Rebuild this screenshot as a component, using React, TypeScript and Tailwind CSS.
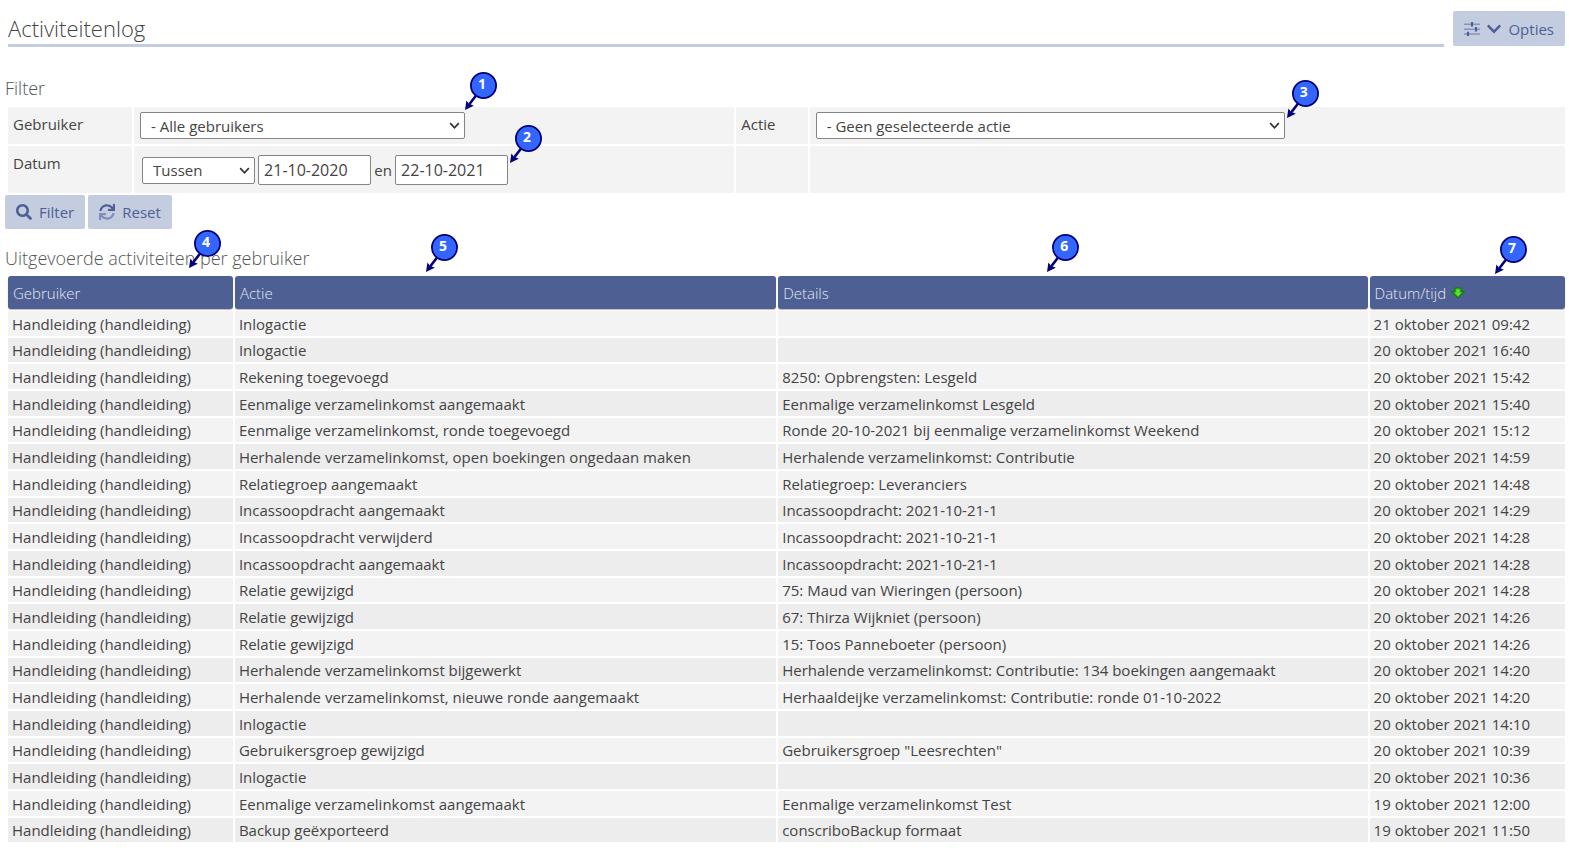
import { clsx } from 'clsx'
import { FaSearch, FaChevronDown } from 'react-icons/fa'

const ROWS = [
  ['Inlogactie', '', '21 oktober 2021 09:42'],
  ['Inlogactie', '', '20 oktober 2021 16:40'],
  ['Rekening toegevoegd', '8250: Opbrengsten: Lesgeld', '20 oktober 2021 15:42'],
  ['Eenmalige verzamelinkomst aangemaakt', 'Eenmalige verzamelinkomst Lesgeld', '20 oktober 2021 15:40'],
  ['Eenmalige verzamelinkomst, ronde toegevoegd', 'Ronde 20-10-2021 bij eenmalige verzamelinkomst Weekend', '20 oktober 2021 15:12'],
  ['Herhalende verzamelinkomst, open boekingen ongedaan maken', 'Herhalende verzamelinkomst: Contributie', '20 oktober 2021 14:59'],
  ['Relatiegroep aangemaakt', 'Relatiegroep: Leveranciers', '20 oktober 2021 14:48'],
  ['Incassoopdracht aangemaakt', 'Incassoopdracht: 2021-10-21-1', '20 oktober 2021 14:29'],
  ['Incassoopdracht verwijderd', 'Incassoopdracht: 2021-10-21-1', '20 oktober 2021 14:28'],
  ['Incassoopdracht aangemaakt', 'Incassoopdracht: 2021-10-21-1', '20 oktober 2021 14:28'],
  ['Relatie gewijzigd', '75: Maud van Wieringen (persoon)', '20 oktober 2021 14:28'],
  ['Relatie gewijzigd', '67: Thirza Wijkniet (persoon)', '20 oktober 2021 14:26'],
  ['Relatie gewijzigd', '15: Toos Panneboeter (persoon)', '20 oktober 2021 14:26'],
  ['Herhalende verzamelinkomst bijgewerkt', 'Herhalende verzamelinkomst: Contributie: 134 boekingen aangemaakt', '20 oktober 2021 14:20'],
  ['Herhalende verzamelinkomst, nieuwe ronde aangemaakt', 'Herhaaldeijke verzamelinkomst: Contributie: ronde 01-10-2022', '20 oktober 2021 14:20'],
  ['Inlogactie', '', '20 oktober 2021 14:10'],
  ['Gebruikersgroep gewijzigd', 'Gebruikersgroep "Leesrechten"', '20 oktober 2021 10:39'],
  ['Inlogactie', '', '20 oktober 2021 10:36'],
  ['Eenmalige verzamelinkomst aangemaakt', 'Eenmalige verzamelinkomst Test', '19 oktober 2021 12:00'],
  ['Backup geëxporteerd', 'conscriboBackup formaat', '19 oktober 2021 11:50'],
]

const BUTTON = 'flex items-center rounded-xs bg-[#c4cde0] text-[#4e5f94]'
const FIELD = 'block rounded-xs border border-[#858585] bg-white'
const CELL = 'rounded-xs bg-[#f3f3f3] px-[5px] align-top text-left font-normal'
const HEADING = '-ml-px text-[18px] leading-6 font-light text-[#555]'

// Numbered pin with an arrow to the lower left
function Callout({ n, className }: { n: number; className: string }) {
  return (
    <span className={clsx('pointer-events-none absolute z-10 h-10 w-[34px]', className)}>
      <svg className="absolute inset-0" width="34" height="40" viewBox="0 0 34 40">
        <path d="M13.5 23 L6.5 32" stroke="#00007c" strokeWidth="2.6" />
        <path d="M2 38 L3.4 28.6 L5.8 31.6 L10.8 33.8 Z" fill="#00007c" />
        <circle cx="20.5" cy="13.5" r="12.6" fill="#3366ff" stroke="#00007c" strokeWidth="1.8" />
      </svg>
      <span className="absolute top-1 left-[7px] w-6 text-center font-['Open_Sans',sans-serif] text-[14px] leading-4 font-bold text-white">
        {n}
      </span>
    </span>
  )
}

function Select({ id, value, className }: { id: string; value: string; className: string }) {
  return (
    <span className={clsx('relative block', className)}>
      <select id={id} className={clsx(FIELD, 'h-[27px] w-full appearance-none pl-[10px] leading-5')}>
        <option>{value}</option>
      </select>
      <svg className="pointer-events-none absolute top-[10px] right-[5px]" width="11" height="8" viewBox="0 0 11 8">
        <path d="M1.2 1.2 L5.5 5.8 L9.8 1.2" fill="none" stroke="#333" strokeWidth="1.7" />
      </svg>
    </span>
  )
}

function SlidersIcon() {
  return (
    <svg width="16" height="14" viewBox="0 0 16 14">
      <path d="M0 2.3H16M0 7.2H16M0 12H16" stroke="#8694ba" strokeWidth="1.4" />
      <path d="M8 0V4.4M12 5V9.4M4 9.8V14" stroke="#4e5f94" strokeWidth="2.2" />
    </svg>
  )
}

function RefreshIcon() {
  return (
    <svg width="16" height="16" viewBox="0 0 512 512">
      <path
        fill="#4e5f94"
        d="M440.65 12.57l4 82.77A247.16 247.16 0 0 0 255.83 8C134.73 8 33.91 94.92 12.29 209.82A12 12 0 0 0 24.09 224h49.05a12 12 0 0 0 11.67-9.26 175.91 175.91 0 0 1 317-56.94l-101.46-4.86a12 12 0 0 0-12.57 12v47.41a12 12 0 0 0 12 12H500a12 12 0 0 0 12-12V12a12 12 0 0 0-12-12h-47.37a12 12 0 0 0-11.98 12.57z"
      />
      <path
        fill="#8290b8"
        d="M255.83 432a175.61 175.61 0 0 1-146-77.8l101.8 4.87a12 12 0 0 0 12.57-12v-47.4a12 12 0 0 0-12-12H12a12 12 0 0 0-12 12V500a12 12 0 0 0 12 12h47.35a12 12 0 0 0 12-12.6l-4.15-82.57A247.17 247.17 0 0 0 255.83 504c121.11 0 221.93-86.92 243.55-201.82a12 12 0 0 0-11.8-14.18h-49.05a12 12 0 0 0-11.67 9.26A175.86 175.86 0 0 1 255.83 432z"
      />
    </svg>
  )
}

function SortIcon() {
  return (
    <svg className="shrink-0" width="14" height="12" viewBox="0 0 14 12">
      <path d="M4 1H10V4.5H13.2L7 11L0.8 4.5H4Z" fill="#43c41a" stroke="#0b7a0b" strokeWidth="1.1" />
      <path d="M5.6 2.5H8.4V6H10L7 9L4 6H5.6Z" fill="#63e02c" />
    </svg>
  )
}

export default function App() {
  return (
    <main className="min-h-screen bg-white pt-[11px] pr-[2px] pl-[6px] font-['Open_Sans',sans-serif] text-[15px] leading-5 text-[#444]">
      <header className="flex items-start px-[2px]">
        <h1 className="h-9 flex-1 border-b-3 border-[#c4cde0] text-[22px] leading-[34px] font-light">Activiteitenlog</h1>
        <button className={clsx(BUTTON, 'ml-[9px] h-[35px] gap-[6px] px-[11px]')}>
          <SlidersIcon />
          <FaChevronDown size={16} />
          Opties
        </button>
      </header>

      <section className="mt-[29px]">
        <h2 className={HEADING}>Filter</h2>
        <table className="mt-[5px] w-full table-fixed border-separate border-spacing-[2px]">
          <colgroup>
            <col className="w-[8%]" />
            <col className="w-[38.7%]" />
            <col className="w-[4.6%]" />
            <col />
          </colgroup>
          <tbody>
            <tr className="h-[37px]">
              <th className={clsx(CELL, 'pt-[7px]')}><label htmlFor="gebruiker">Gebruiker</label></th>
              <td className={clsx(CELL, 'pt-[5px] pl-[6px]')}>
                <div className="relative w-[325px]">
                  <Select id="gebruiker" value="- Alle gebruikers" className="w-full" />
                  <Callout n={1} className="-top-10 -right-8" />
                </div>
              </td>
              <th className={clsx(CELL, 'pt-[7px]')}><label htmlFor="actie">Actie</label></th>
              <td className={clsx(CELL, 'pt-[5px] pl-[6px]')}>
                <div className="relative w-[469px]">
                  <Select id="actie" value="- Geen geselecteerde actie" className="w-full" />
                  <Callout n={3} className="-top-8 -right-[34px]" />
                </div>
              </td>
            </tr>
            <tr className="h-[47px]">
              <th className={clsx(CELL, 'pt-[7px]')}><label htmlFor="datum">Datum</label></th>
              <td className={clsx(CELL, 'pt-[9px] pl-[6px]')}>
                <div className="flex items-center gap-[3px] pl-[2px]">
                  <Select id="datum" value="Tussen" className="w-[113px]" />
                  <input aria-label="Datum van" defaultValue="21-10-2020" className={clsx(FIELD, 'h-[30px] w-[113px] px-[5px] text-base')} />
                  <span className="w-[18px] text-center">en</span>
                  <span className="relative">
                    <input aria-label="Datum tot" defaultValue="22-10-2021" className={clsx(FIELD, 'h-[30px] w-[113px] px-[5px] text-base')} />
                    <Callout n={2} className="-top-[30px] -right-[34px]" />
                  </span>
                </div>
              </td>
              <td className={CELL} />
              <td className={CELL} />
            </tr>
          </tbody>
        </table>
        <div className="-ml-px flex gap-[3px]">
          <button className={clsx(BUTTON, 'h-[34px] gap-[7px] px-[11px]')}>
            <FaSearch size={16} />
            Filter
          </button>
          <button className={clsx(BUTTON, 'h-[34px] gap-[7px] px-[11px]')}>
            <RefreshIcon />
            Reset
          </button>
        </div>
      </section>

      <section className="mt-[17px]">
        <h2 className={HEADING}>Uitgevoerde activiteiten per gebruiker</h2>
        <table className="mt-1 w-full table-fixed border-separate border-spacing-[2px]">
          <colgroup>
            <col className="w-[14.5%]" />
            <col className="w-[34.9%]" />
            <col />
            <col className="w-[12.6%]" />
          </colgroup>
          <thead>
            <tr className="h-[33px] text-left text-[#e4e8f2] [&>th]:relative [&>th]:rounded-[3px] [&>th]:bg-[#4e5f94] [&>th]:px-[5px] [&>th]:font-light [&>th]:shadow-[0_1px_1px_#bbb]">
              <th>Gebruiker<Callout n={4} className="-top-[46px] right-3" /></th>
              <th>Actie<Callout n={5} className="-top-[42px] left-[189px]" /></th>
              <th>Details<Callout n={6} className="-top-[42px] left-[267px]" /></th>
              <th>
                <span className="flex items-center gap-[5px]">Datum/tijd <SortIcon /></span>
                <Callout n={7} className="-top-10 right-[38px]" />
              </th>
            </tr>
          </thead>
          <tbody className="leading-[22px]">
            {ROWS.map(([actie, details, datum], i) => (
              <tr
                key={i}
                className="h-[25px] bg-[#f3f3f3] even:bg-[#ededed] nth-[3n+2]:h-6 [&>td]:truncate [&>td]:px-1"
              >
                <td>Handleiding (handleiding)</td>
                <td>{actie}</td>
                <td>{details}</td>
                <td>{datum}</td>
              </tr>
            ))}
          </tbody>
        </table>
      </section>
    </main>
  )
}
